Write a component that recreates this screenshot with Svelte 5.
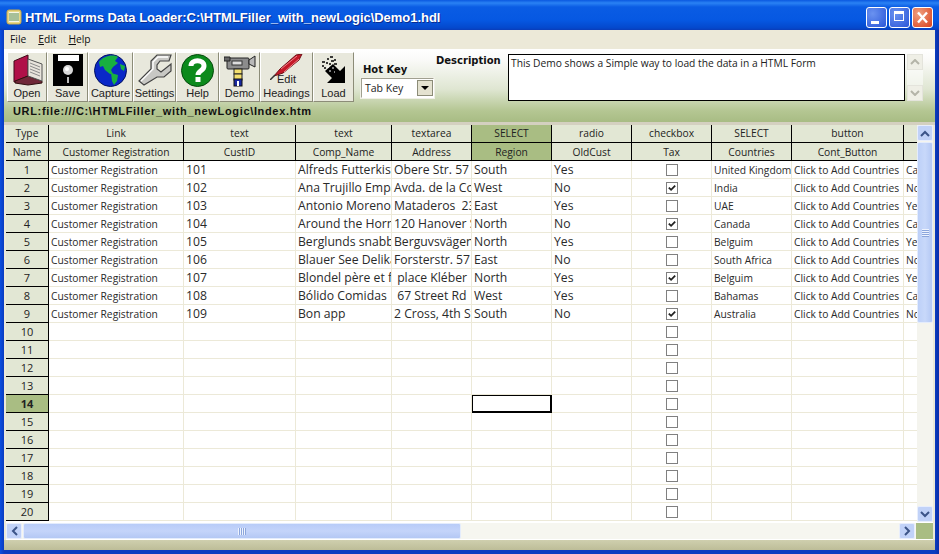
<script lang="ts">
  const menus = [
    { label: `File`, key: `` },
    { label: `dit`, key: `E` },
    { label: `elp`, key: `H` },
  ]
  const tools = [
    { id: `open`, label: [`Open`], width: 40 },
    { id: `save`, label: [`Save`], width: 41 },
    { id: `capture`, label: [`Capture`], width: 45 },
    { id: `settings`, label: [`Settings`], width: 43 },
    { id: `help`, label: [`Help`], width: 43 },
    { id: `demo`, label: [`Demo`], width: 41 },
    { id: `edit`, label: [`Edit`, `Headings`], width: 53 },
    { id: `load`, label: [`Load`], width: 41 },
  ]
  const columns = [
    { type: `Link`, name: `Customer Registration`, width: 135, small: true },
    { type: `text`, name: `CustID`, width: 112 },
    { type: `text`, name: `Comp_Name`, width: 96 },
    { type: `textarea`, name: `Address`, width: 80 },
    { type: `SELECT`, name: `Region`, width: 80, active: true },
    { type: `radio`, name: `OldCust`, width: 80 },
    { type: `checkbox`, name: `Tax`, width: 80, check: true },
    { type: `SELECT`, name: `Countries`, width: 80, small: true },
    { type: `button`, name: `Cont_Button`, width: 112, small: true },
    { type: ``, name: ``, width: 14, small: true },
  ]
  const data = [
    [`101`, `Alfreds Futterkiste`, `Obere Str. 57`, `South`, `Yes`, false, `United Kingdom`, `Ca`],
    [`102`, `Ana Trujillo Emparedados`, `Avda. de la Constitución`, `West`, `No`, true, `India`, `No`],
    [`103`, `Antonio Moreno Taquería`, `Mataderos  2312`, `East`, `Yes`, false, `UAE`, `Ye`],
    [`104`, `Around the Horn`, `120 Hanover Sq.`, `North`, `No`, true, `Canada`, `Ca`],
    [`105`, `Berglunds snabbköp`, `Berguvsvägen 8`, `North`, `Yes`, false, `Belguim`, `Ye`],
    [`106`, `Blauer See Delikatessen`, `Forsterstr. 57`, `East`, `No`, false, `South Africa`, `No`],
    [`107`, `Blondel père et fils`, ` place Kléber`, `North`, `Yes`, true, `Belguim`, `Ye`],
    [`108`, `Bólido Comidas`, ` 67 Street Rd`, `West`, `Yes`, false, `Bahamas`, `Ca`],
    [`109`, `Bon app`, `2 Cross, 4th Street`, `South`, `No`, true, `Australia`, `No`],
  ]
  const rows = Array.from({ length: 20 }, (_, i) => {
    const d = data[i]
    if (!d) return { values: Array(10).fill(``), checked: false }
    return {
      values: [
        `Customer Registration`, d[0], d[1], d[2], d[3], d[4], ``, d[6],
        `Click to Add Countries`, d[7],
      ],
      checked: d[5],
    }
  })
  const template = columns.map((c) => `${c.width}px`).join(` `)
</script>

<div class="window">
  <header class="titlebar">
    <svg class="app-icon" viewBox="0 0 16 16" width="16" height="16">
      <rect x="1" y="1" width="14" height="14" rx="2" fill="#e8d98a" stroke="#c8a848" />
      <rect x="3" y="3" width="10" height="10" fill="#f6f6e8" />
      <path d="M4 4v8M6 4v8M8 4v8M10 4v8M12 4v8" stroke="#5a8a4a" />
    </svg>
    <span class="title">HTML Forms Data Loader:C:\HTMLFiller_with_newLogic\Demo1.hdl</span>
    <div class="caption">
      <button class="cap min" aria-label="Minimize"><i></i></button>
      <button class="cap max" aria-label="Maximize"><i></i></button>
      <button class="cap close" aria-label="Close">
        <svg viewBox="0 0 21 21" width="21" height="21"><path d="M6 5.5l9 10M15 5.5l-9 10" stroke="#fff" stroke-width="2.4" /></svg>
      </button>
    </div>
  </header>

  <div class="client">
    <nav class="menubar">
      {#each menus as m}
        <span><u>{m.key}</u>{m.label}</span>
      {/each}
    </nav>

    <section class="toolbar-area">
      <div class="toolbar">
        <div class="tools">
          {#each tools as t}
            <button class="tool" style="width: {t.width}px">
              <span class="glyph">
                {#if t.id === `open`}
                  <svg viewBox="0 0 32 32" width="32" height="32">
                    <path d="M3 7 L17 1 V22 L3 28 Z" fill="#b01048" stroke="#400818" />
                    <path d="M4 27 L17 22 L31 27 L31 29 L17 31 L4 29 Z" fill="#702838" stroke="#301010" />
                    <path d="M17 5 L31 10 V27 L17 22 Z" fill="#e8e4dc" stroke="#555" />
                    <path d="M19 9l10 4M19 12l10 4M19 15l10 4M19 18l10 4" stroke="#8a8a8a" />
                  </svg>
                {:else if t.id === `save`}
                  <svg viewBox="0 0 30 32" width="30" height="32">
                    <path d="M0 0 H30 V32 H0 Z" fill="#000" />
                    <rect x="5" y="1" width="21" height="6" fill="#fff" />
                    <circle cx="15" cy="16" r="5" fill="#d8d8d8" />
                    <circle cx="14" cy="15" r="2" fill="#fff" />
                    <rect x="14" y="23" width="2" height="6" fill="#bbb" />
                  </svg>
                {:else if t.id === `capture`}
                  <svg viewBox="0 0 33 33" width="33" height="33">
                    <circle cx="16.5" cy="16.5" r="16" fill="#0a28c8" stroke="#001060" />
                    <path d="M5 8 C9 2 19 0 24 3 L21 7 L24 9 L19 13 L17 16 L19 20 L16 20 L11 16 L9 12 L6 13 Z" fill="#18b040" />
                    <path d="M17 19 L24 21 L23 27 L20 31 L18 27 Z" fill="#18b040" />
                    <path d="M26 10 L31 12 L30 17 L27 15 Z" fill="#18b040" />
                  </svg>
                {:else if t.id === `settings`}
                  <svg viewBox="0 0 34 32" width="34" height="32">
                    <path d="M1 27 L13 15 V7 L19 1 H33 L31 7 H22 L19 11 V15 L23 18 L33 10 V17 L26 23 H19 L6 31 Z" fill="#c8c8c4" stroke="#444" stroke-width="1.2" />
                    <path d="M3 27 L15 15 V8 L20 3 H30" fill="none" stroke="#fff" stroke-width="1.4" />
                  </svg>
                {:else if t.id === `help`}
                  <svg viewBox="0 0 33 33" width="33" height="33">
                    <circle cx="16.5" cy="16.5" r="16" fill="#0c8a1c" stroke="#044a0c" />
                    <path d="M10 12 C10 5 23 5 23 12 C23 17 17 16.5 17 21" fill="none" stroke="#fff" stroke-width="5" />
                    <rect x="14.5" y="23" width="5" height="5" fill="#fff" />
                  </svg>
                {:else if t.id === `demo`}
                  <svg viewBox="0 0 32 33" width="32" height="33">
                    <rect x="3" y="4" width="22" height="11" rx="1" fill="#8c8c8c" stroke="#222" />
                    <path d="M25 6 L31 2 V13 L25 10 Z" fill="#b8b8b8" stroke="#222" />
                    <path d="M0 3 H6 V7 H0 Z" fill="#666" stroke="#222" />
                    <rect x="8" y="7" width="10" height="4" fill="#ddd" stroke="#333" />
                    <rect x="10" y="15" width="8" height="5" fill="#f4e070" stroke="#222" />
                    <rect x="10" y="20" width="8" height="6" fill="#f4e070" stroke="#222" />
                    <rect x="10" y="25" width="8" height="7" fill="#1828a0" stroke="#111" />
                    <rect x="13" y="27" width="2" height="5" fill="#fff" />
                  </svg>
                {:else if t.id === `edit`}
                  <svg viewBox="0 0 34 26" width="34" height="26">
                    <path d="M4 22 L10 15 L26 1 L32 0 L29 6 L13 19 Z" fill="#c41828" stroke="#701018" />
                    <path d="M11 15 L27 2 M14 18 L29 5" stroke="#f08088" />
                    <path d="M0 26 L5 21" stroke="#333" stroke-width="1.5" />
                  </svg>
                {:else}
                  <svg class="load-icon" viewBox="0 0 26 28" width="26" height="28">
                    <path d="M24 10 V27 H6 L11 22 L4 15 L12 8 L19 15 Z" fill="#000" />
                    <path d="M1 6h3M6 3h2M9 1h3M5 7h2M10 5h3M13 4h2M1 10h2M8 8h2M13 8h3M3 12h2" stroke="#000" stroke-width="1.6" />
                    <path d="M6 11h2M11 12h2M8 15h2M13 16h1" stroke="#fff" />
                  </svg>
                {/if}
              </span>
              {#each t.label as line}
                <span class="tool-label">{line}</span>
              {/each}
            </button>
          {/each}
        </div>

        <div class="hotkey">
          <label for="hot">Hot Key</label>
          <div class="combo" id="hot">
            <span>Tab Key</span>
            <i class="combo-btn"></i>
          </div>
        </div>

        <strong class="desc-label">Description</strong>
        <div class="desc">This Demo shows a Simple way to load the data in a HTML Form</div>
        <div class="desc-scroll">
          <button class="mini" aria-label="Up"><svg viewBox="0 0 10 6" width="10" height="6"><path d="M1 5l4-4 4 4" fill="none" stroke="#b4b4a8" stroke-width="2" /></svg></button>
          <button class="mini" aria-label="Down"><svg viewBox="0 0 10 6" width="10" height="6"><path d="M1 1l4 4 4-4" fill="none" stroke="#b4b4a8" stroke-width="2" /></svg></button>
        </div>
      </div>
      <div class="url">URL:file:///C:\HTMLFiller_with_newLogic\Index.htm</div>
    </section>

    <section class="sheet">
      <div class="sheet-main">
        <div class="grid-view">
          <div class="row head">
            <div class="hdr corner type">Type</div>
            <div class="cols" style="grid-template-columns: {template}">
              {#each columns as c}
                <div class="hdr type" class:active={c.active}>{c.type}</div>
              {/each}
            </div>
          </div>
          <div class="row head">
            <div class="hdr corner">Name</div>
            <div class="cols" style="grid-template-columns: {template}">
              {#each columns as c}
                <div class="hdr" class:active={c.active}>{c.name}</div>
              {/each}
            </div>
          </div>
          {#each rows as r, i}
            <div class="row">
              <div class="hdr corner num" class:current={i === 13}>{i + 1}</div>
              <div class="cols" style="grid-template-columns: {template}">
                {#each columns as c, j}
                  <div class="cell" class:small={c.small} class:selected={i === 13 && j === 4}>
                    {#if c.check}
                      <span class="box">
                        {#if r.checked}
                          <svg viewBox="0 0 11 11" width="10" height="10"><path d="M2 5l2.5 2.5L9 3" fill="none" stroke="#222" stroke-width="2" /></svg>
                        {/if}
                      </span>
                    {:else}
                      {r.values[j]}
                    {/if}
                  </div>
                {/each}
              </div>
            </div>
          {/each}
        </div>
        <div class="vscroll">
          <button class="sb-btn" aria-label="Up"><svg viewBox="0 0 10 7" width="10" height="7"><path d="M1 6l4-4 4 4" fill="none" stroke="#3c5488" stroke-width="2" /></svg></button>
          <div class="v-track">
            <div class="v-thumb"><i></i></div>
          </div>
          <button class="sb-btn" aria-label="Down"><svg viewBox="0 0 10 7" width="10" height="7"><path d="M1 1l4 4 4-4" fill="none" stroke="#3c5488" stroke-width="2" /></svg></button>
        </div>
      </div>
      <div class="hscroll">
        <button class="sb-btn" aria-label="Left"><svg viewBox="0 0 7 10" width="7" height="10"><path d="M6 1L2 5l4 4" fill="none" stroke="#3c5488" stroke-width="2" /></svg></button>
        <div class="h-track">
          <div class="h-thumb"><i></i></div>
        </div>
        <button class="sb-btn" aria-label="Right"><svg viewBox="0 0 7 10" width="7" height="10"><path d="M1 1l4 4-4 4" fill="none" stroke="#3c5488" stroke-width="2" /></svg></button>
        <div class="sb-corner"></div>
      </div>
    </section>

    <footer class="status"></footer>
  </div>
</div>

<style>
  :global(body) {
    margin: 0;
    background: #0a3cc8;
  }
  .window {
    width: 939px;
    height: 554px;
    display: flex;
    flex-direction: column;
    box-sizing: border-box;
    padding: 0 4px 4px;
    background: linear-gradient(90deg, #0a4ee0, #0a3cc0 4px, #0a3cc0 935px, #0a2ea8);
    font-family: "Open Sans", "Liberation Sans", sans-serif;
    overflow: hidden;
    color: #111;
  }
  .titlebar {
    height: 30px;
    box-sizing: border-box;
    flex: none;
    margin: 0 -4px;
    padding: 4px 6px 0 6px;
    display: flex;
    align-items: center;
    gap: 3px;
    background: linear-gradient(180deg, #0a58e0 0, #2a82f4 3px, #0a5ce4 7px, #0658e2 20px, #0448cc 28px, #0a3cb8);
  }
  .app-icon {
    flex: none;
  }
  .title {
    flex: 1;
    color: #fff;
    font: bold 13px "Liberation Sans", sans-serif;
    letter-spacing: -0.03px;
    text-shadow: 1px 1px 0 #0a2c90;
    white-space: nowrap;
  }
  .caption {
    display: flex;
    gap: 2px;
  }
  .cap {
    width: 21px;
    height: 21px;
    padding: 0;
    border: 1px solid #fff;
    border-radius: 3px;
    background: radial-gradient(circle at 30% 30%, #6a92f0, #2a56d8);
    position: relative;
    box-sizing: border-box;
  }
  .cap i {
    position: absolute;
    display: block;
  }
  .min i {
    left: 4px;
    bottom: 3px;
    width: 8px;
    height: 3px;
    background: #fff;
  }
  .max i {
    left: 4px;
    top: 3px;
    width: 10px;
    height: 10px;
    box-sizing: border-box;
    border: 1px solid #fff;
    border-top-width: 3px;
  }
  .close {
    background: radial-gradient(circle at 30% 30%, #f0a080, #d8401c);
  }
  .close svg {
    position: absolute;
    left: -1px;
    top: -1px;
  }
  .client {
    flex: 1;
    display: flex;
    flex-direction: column;
    background: #ece9d8;
    min-height: 0;
  }
  .menubar {
    height: 19px;
    box-sizing: border-box;
    flex: none;
    display: flex;
    gap: 12px;
    align-items: center;
    padding: 0 0 1px 6px;
    font-size: 10.25px;
  }
  .menubar u {
    text-decoration: underline;
  }
  .toolbar-area {
    flex: none;
    height: 73px;
    background: linear-gradient(180deg, #ffffff 0, #fafaf8 15%, #dfe6d2 55%, #b4c692 85%, #a8bc84);
    border-bottom: 3px solid #d4d0c0;
  }
  .toolbar {
    height: 53px;
    display: flex;
    position: relative;
  }
  .tools {
    display: flex;
    padding: 3px 0 0 3px;
    height: 50px;
  }
  .tool {
    height: 50px;
    box-sizing: border-box;
    margin: 0;
    padding: 0;
    display: flex;
    flex-direction: column;
    align-items: center;
    justify-content: flex-end;
    border: 1px solid;
    border-color: #fff #8c8c78 #8c8c78 #fff;
    background: #e8e8dc;
    font: 11px "Liberation Sans", sans-serif;
    color: #222;
    position: relative;
  }
  .glyph {
    position: absolute;
    left: 0;
    right: 0;
    top: 1px;
    display: flex;
    justify-content: center;
  }
  .load-icon {
    margin-top: 2px;
  }
  .tool-label {
    line-height: 14px;
    height: 14px;
    position: relative;
    white-space: nowrap;
  }
  .tool-label:last-child {
    margin-bottom: 1px;
  }
  .hotkey {
    width: 75px;
    margin-left: 7px;
    padding-top: 13px;
    flex: none;
  }
  .hotkey label {
    display: block;
    font: bold 10px "DejaVu Sans", sans-serif;
    padding-left: 2px;
    height: 16px;
    line-height: 15px;
    color: #111;
  }
  .combo {
    width: 73px;
    height: 20px;
    box-sizing: border-box;
    border: 1px solid #888;
    border-color: #a0a090 #fff #fff #a0a090;
    background: #fff;
    outline: 1px solid #f0f0e6;
    display: flex;
    align-items: center;
    justify-content: space-between;
    padding-left: 3px;
    font: 10.5px "Open Sans", sans-serif;
    color: #222;
  }
  .combo-btn {
    width: 16px;
    height: 16px;
    background: #e4e2d0;
    border: 1px solid #8c8c78;
    box-sizing: border-box;
    display: flex;
    align-items: center;
    justify-content: center;
  }
  .combo-btn::after {
    content: "";
    border: 4px solid transparent;
    border-top: 4px solid #000;
    border-bottom: 0;
  }
  .desc-label {
    flex: none;
    width: 72px;
    padding-top: 6px;
    font: bold 10px "DejaVu Sans", sans-serif;
  }
  .desc {
    flex: none;
    width: 397px;
    height: 47px;
    margin-top: 5px;
    box-sizing: border-box;
    border: 1px solid #000;
    background: #fff;
    padding: 1px 2px;
    font-size: 10.25px;
    line-height: 14px;
    color: #222;
  }
  .desc-scroll {
    width: 16px;
    height: 47px;
    margin: 5px 0 0 2px;
    display: flex;
    flex-direction: column;
    justify-content: space-between;
    background: rgba(255, 255, 255, 0.5);
  }
  .mini {
    width: 16px;
    height: 16px;
    padding: 0;
    border: 1px solid #e4e4dc;
    background: #efefe6;
    display: flex;
    align-items: center;
    justify-content: center;
  }
  .url {
    height: 20px;
    padding-left: 9px;
    font: bold 11px/19px "Liberation Sans", sans-serif;
    letter-spacing: 0.66px;
    color: #111;
  }
  .sheet {
    flex: 1;
    min-height: 0;
    display: flex;
    flex-direction: column;
    background: #fff;
    margin-left: 2px;
    margin-right: 2px;
  }
  .sheet-main {
    flex: none;
    height: 397px;
    display: flex;
  }
  .grid-view {
    width: 911px;
    height: 396px;
    overflow: hidden;
    background: #fff;
  }
  .row {
    display: flex;
    height: 18px;
  }
  .cols {
    display: grid;
  }
  .hdr {
    box-sizing: border-box;
    height: 18px;
    background: #e2e7d4;
    border-right: 1px solid #000;
    border-bottom: 1px solid #000;
    font-size: 10.25px;
    line-height: 18px;
    text-align: center;
    color: #222;
    white-space: nowrap;
    overflow: hidden;
  }
  .hdr.type {
    line-height: 17px;
  }
  .hdr.corner {
    width: 43px;
    flex: none;
  }
  .hdr.num {
    font-size: 11px;
  }
  .hdr.current {
    background: #a9bd83;
    font-weight: bold;
  }
  .hdr.active {
    background: #a9bd83;
  }
  .cell {
    box-sizing: border-box;
    height: 18px;
    border-right: 1px solid #ece9d8;
    border-bottom: 1px solid #ece9d8;
    padding-left: 2px;
    font-size: 12.2px;
    line-height: 18px;
    white-space: pre;
    overflow: hidden;
    color: #2a2a2a;
    position: relative;
    text-align: left;
  }
  .cell.small {
    font-size: 10.25px;
  }
  .cell.selected {
    border-color: #000;
    box-shadow: inset 0 0 0 1px #000;
  }
  .box {
    display: block;
    width: 10px;
    height: 10px;
    margin: 3px 0 0 32px;
    border: 1px solid #808080;
  }
  .box svg {
    display: block;
  }
  .vscroll {
    width: 16px;
    flex: none;
    display: flex;
    flex-direction: column;
    background: #f4f4ee;
  }
  .v-track {
    flex: 1;
    min-height: 0;
    padding-top: 1px;
  }
  .v-thumb {
    height: 181px;
    box-sizing: border-box;
    background: linear-gradient(90deg, #bdd0f8, #c8d8fa 50%, #b4c8f4);
    border: 1px solid #e4ecfc;
    border-radius: 2px;
    display: flex;
    align-items: center;
    justify-content: center;
  }
  .v-thumb i {
    width: 7px;
    height: 8px;
    background: repeating-linear-gradient(180deg, #eef3fe 0 1px, #8ca6dc 1px 2px);
  }
  .sb-btn {
    width: 16px;
    height: 16px;
    flex: none;
    padding: 0;
    border: 1px solid #e8eefc;
    border-radius: 2px;
    background: #c1d2f8;
    display: flex;
    align-items: center;
    justify-content: center;
  }
  .hscroll {
    height: 16px;
    flex: none;
    margin-top: 1px;
    display: flex;
    background: #f6f6f0;
  }
  .h-track {
    flex: 1;
    min-width: 0;
    padding-left: 1px;
  }
  .h-thumb {
    width: 438px;
    height: 16px;
    box-sizing: border-box;
    background: linear-gradient(180deg, #b8ccf8, #c4d4fa 50%, #b4c8f4);
    border: 1px solid #e4ecfc;
    border-radius: 2px;
    display: flex;
    align-items: center;
    justify-content: center;
  }
  .h-thumb i {
    width: 8px;
    height: 7px;
    background: repeating-linear-gradient(90deg, #eef3fe 0 1px, #8ca6dc 1px 2px);
  }
  .sb-corner {
    width: 17px;
    margin-left: 1px;
    flex: none;
    background: #a9bd83;
  }
  .status {
    flex: none;
    height: 10px;
    background: linear-gradient(180deg, #cfcfae, #bdbd98);
  }
</style>
